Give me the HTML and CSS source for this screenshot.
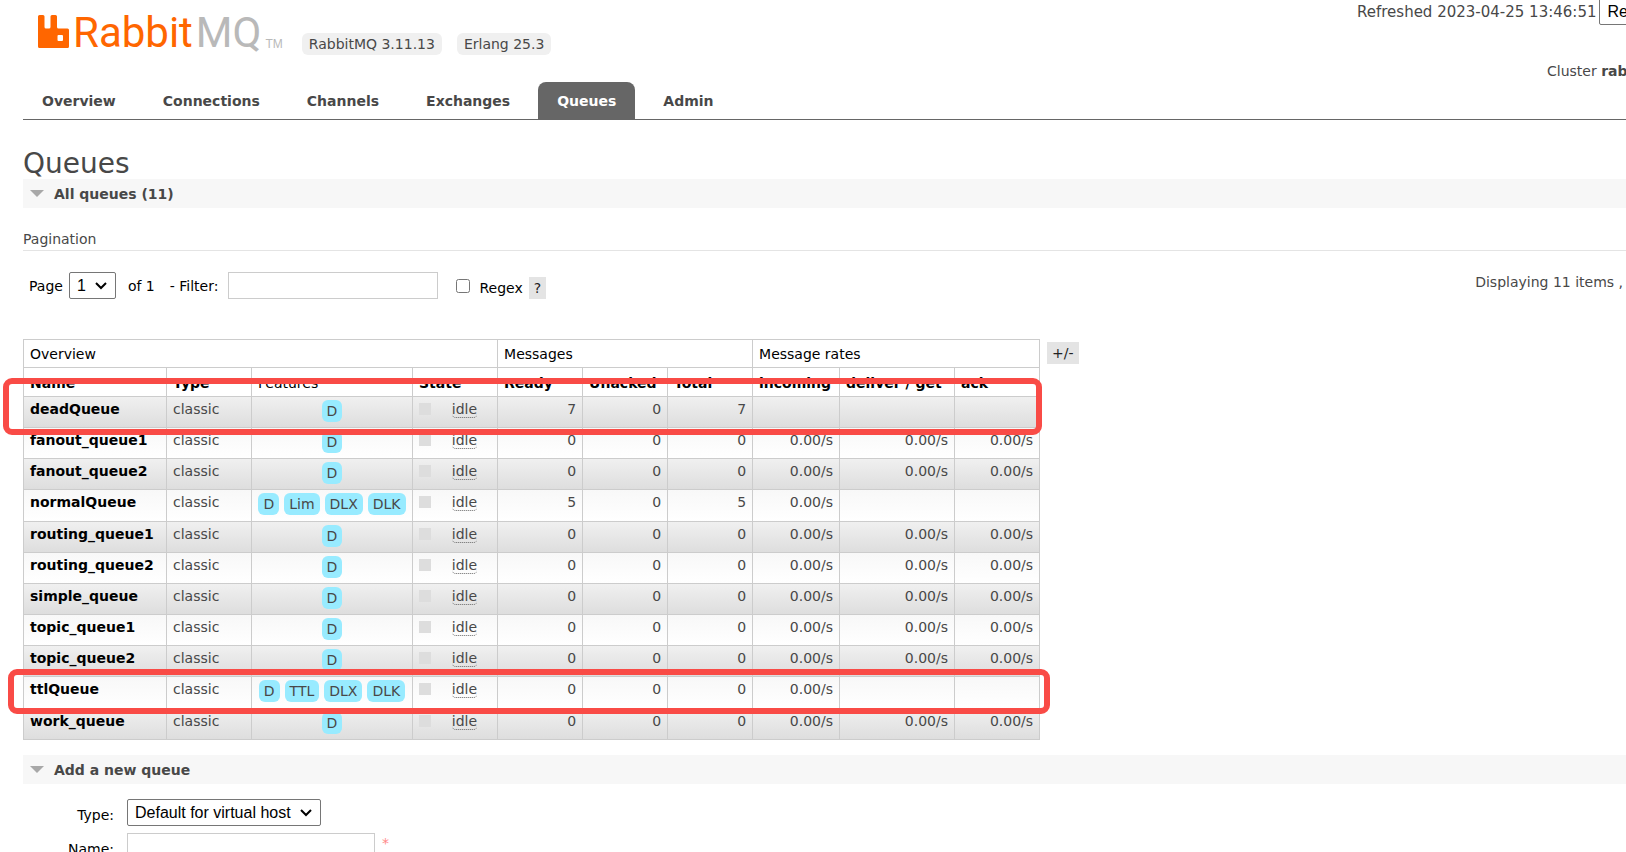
FILE: index.html
```html
<!DOCTYPE html>
<html lang="en">
<head>
<meta charset="utf-8">
<title>RabbitMQ Management</title>
<link rel="stylesheet" href="styles.css">
</head>
<body>
<header class="header">
  <div class="brand">
    <a class="logo" href="#">
      <svg class="logo-mark" viewBox="0 0 31 33" aria-hidden="true"><path fill="#f60" fill-rule="evenodd" d="M1.500 0H5Q6.500 0 6.500 1.500V12Q6.500 13.500 8 13.500H11Q12.500 13.500 12.500 12V1.500Q12.500 0 14 0H17.500Q19 0 19 1.500V12Q19 13.500 20.500 13.500H29.500Q31 13.500 31 15V31.500Q31 33 29.500 33H1.500Q0 33 0 31.500V1.500Q0 0 1.500 0ZM20.500 20Q19.500 20 19.500 21V25Q19.500 26 20.500 26H24Q25 26 25 25V21Q25 20 24 20Z"/></svg>
      <span class="logo-text">Rabbit<span class="logo-mq">MQ</span></span><span class="logo-tm">TM</span>
    </a>
    <span class="version">RabbitMQ 3.11.13</span>
    <span class="version">Erlang 25.3</span>
  </div>
  <div class="status">
    <div class="refresh"><label for="refresh">Refreshed 2023-04-25 13:46:51</label><select id="refresh"><option>Refresh</option></select></div>
    <div class="cluster">Cluster <b>rab</b></div>
  </div>
</header>
<nav class="tabs">
  <a href="#">Overview</a><a href="#">Connections</a><a href="#">Channels</a><a href="#">Exchanges</a><a class="selected" href="#">Queues</a><a href="#">Admin</a>
</nav>
<main class="main">
  <h1>Queues</h1>
  <h2 class="section">All queues (11)</h2>
  <h3 class="subhead">Pagination</h3>
  <div class="pager">
    <label for="page">Page</label><select id="page"><option>1</option></select>
    <span class="of">of 1</span>
    <label class="filter-label" for="filter">- Filter:</label><input id="filter" class="text filter" type="text">
    <input id="regex" class="check" type="checkbox"><label class="low" for="regex">Regex</label><button class="help low" type="button">?</button>
    <span class="count">Displaying 11 items ,</span>
  </div>
  <div class="list">
    <table class="queues">
      <colgroup><col class="c-name"><col class="c-num"><col class="c-feat"><col class="c-num"><col class="c-num"><col class="c-num"><col class="c-num"><col class="c-in"><col class="c-get"><col class="c-num"></colgroup>
      <thead>
        <tr class="groups"><th colspan="4">Overview</th><th colspan="3">Messages</th><th colspan="3">Message rates</th></tr>
        <tr><th>Name</th><th>Type</th><th class="plain">Features</th><th>State</th><th>Ready</th><th>Unacked</th><th>Total</th><th>incoming</th><th>deliver / get</th><th>ack</th></tr>
      </thead>
      <tbody>
        <tr><td><a href="#">deadQueue</a></td><td>classic</td><td class="feat"><span>D</span></td><td><div class="state"><i></i><abbr>idle</abbr></div></td><td class="r">7</td><td class="r">0</td><td class="r">7</td><td class="r"></td><td class="r"></td><td class="r"></td></tr>
        <tr><td><a href="#">fanout_queue1</a></td><td>classic</td><td class="feat"><span>D</span></td><td><div class="state"><i></i><abbr>idle</abbr></div></td><td class="r">0</td><td class="r">0</td><td class="r">0</td><td class="r">0.00/s</td><td class="r">0.00/s</td><td class="r">0.00/s</td></tr>
        <tr><td><a href="#">fanout_queue2</a></td><td>classic</td><td class="feat"><span>D</span></td><td><div class="state"><i></i><abbr>idle</abbr></div></td><td class="r">0</td><td class="r">0</td><td class="r">0</td><td class="r">0.00/s</td><td class="r">0.00/s</td><td class="r">0.00/s</td></tr>
        <tr class="multi"><td><a href="#">normalQueue</a></td><td>classic</td><td class="feat"><span>D</span><span>Lim</span><span>DLX</span><span>DLK</span></td><td><div class="state"><i></i><abbr>idle</abbr></div></td><td class="r">5</td><td class="r">0</td><td class="r">5</td><td class="r">0.00/s</td><td class="r"></td><td class="r"></td></tr>
        <tr><td><a href="#">routing_queue1</a></td><td>classic</td><td class="feat"><span>D</span></td><td><div class="state"><i></i><abbr>idle</abbr></div></td><td class="r">0</td><td class="r">0</td><td class="r">0</td><td class="r">0.00/s</td><td class="r">0.00/s</td><td class="r">0.00/s</td></tr>
        <tr><td><a href="#">routing_queue2</a></td><td>classic</td><td class="feat"><span>D</span></td><td><div class="state"><i></i><abbr>idle</abbr></div></td><td class="r">0</td><td class="r">0</td><td class="r">0</td><td class="r">0.00/s</td><td class="r">0.00/s</td><td class="r">0.00/s</td></tr>
        <tr><td><a href="#">simple_queue</a></td><td>classic</td><td class="feat"><span>D</span></td><td><div class="state"><i></i><abbr>idle</abbr></div></td><td class="r">0</td><td class="r">0</td><td class="r">0</td><td class="r">0.00/s</td><td class="r">0.00/s</td><td class="r">0.00/s</td></tr>
        <tr><td><a href="#">topic_queue1</a></td><td>classic</td><td class="feat"><span>D</span></td><td><div class="state"><i></i><abbr>idle</abbr></div></td><td class="r">0</td><td class="r">0</td><td class="r">0</td><td class="r">0.00/s</td><td class="r">0.00/s</td><td class="r">0.00/s</td></tr>
        <tr><td><a href="#">topic_queue2</a></td><td>classic</td><td class="feat"><span>D</span></td><td><div class="state"><i></i><abbr>idle</abbr></div></td><td class="r">0</td><td class="r">0</td><td class="r">0</td><td class="r">0.00/s</td><td class="r">0.00/s</td><td class="r">0.00/s</td></tr>
        <tr class="multi"><td><a href="#">ttlQueue</a></td><td>classic</td><td class="feat"><span>D</span><span>TTL</span><span>DLX</span><span>DLK</span></td><td><div class="state"><i></i><abbr>idle</abbr></div></td><td class="r">0</td><td class="r">0</td><td class="r">0</td><td class="r">0.00/s</td><td class="r"></td><td class="r"></td></tr>
        <tr><td><a href="#">work_queue</a></td><td>classic</td><td class="feat"><span>D</span></td><td><div class="state"><i></i><abbr>idle</abbr></div></td><td class="r">0</td><td class="r">0</td><td class="r">0</td><td class="r">0.00/s</td><td class="r">0.00/s</td><td class="r">0.00/s</td></tr>
      </tbody>
    </table>
    <button class="help columns" type="button">+/-</button>
    <div class="mark mark-dead"></div>
    <div class="mark mark-ttl"></div>
  </div>
  <h2 class="section">Add a new queue</h2>
  <form class="form">
    <label for="type">Type:</label><div><select id="type"><option>Default for virtual host</option></select></div>
    <label for="name">Name:</label><div class="field"><input id="name" class="text name" type="text"><span class="mand">*</span></div>
  </form>
</main>
</body>
</html>
```
FILE: styles.css
```css
* { box-sizing: border-box; }
html, body { height: 100%; overflow: hidden; }
body { margin: 0; background: #fff; color: #484848; font: 14px/20px Verdana, "DejaVu Sans", sans-serif; }
a { color: inherit; text-decoration: none; }
h1, h2, h3 { margin: 0; }

.header { display: flex; justify-content: space-between; height: 82px; padding-left: 38px; }
.brand { display: flex; align-items: flex-start; }
.logo { display: flex; align-items: flex-start; padding-top: 15px; margin-right: 19px; }
.logo-mark { width: 31px; height: 33px; margin-right: 4px; }
.logo-text { color: #f60; font: 42px/36px Roboto, sans-serif; }
.logo-mq { color: #b9b9b9; margin-left: 3px; }
.logo-tm { color: #b9b9b9; font: 12px/14px "Liberation Sans", sans-serif; margin: 22px 0 0 4px; }
.version { margin: 33px 15px 0 0; padding: 1px 7px; border-radius: 6px; background: #f0f0f0; }
.status { overflow: hidden; width: 269px; white-space: nowrap; }
.refresh { display: flex; gap: 3px; margin-top: -2px; }
.refresh label { padding-top: 4px; flex: none; font-size: 15px; }
.refresh select { flex: none; width: 200px; }
.cluster { margin-top: 36px; padding-left: 190px; }

.tabs { display: flex; gap: 9px; margin-left: 23px; border-bottom: 1px solid #666; font-weight: bold; }
.tabs a { padding: 9px 19px 8px; border-radius: 8px 8px 0 0; }
.tabs .selected { background: #666; color: #fff; }

.main { padding: 28px 0 0 23px; }
h1 { font-size: 28px; line-height: 31px; font-weight: normal; }
.section { display: flex; align-items: center; gap: 10px; height: 29px; padding-left: 7px; background: #f7f7f7; font-size: 14px; line-height: 20px; }
.section::before { content: ""; border: solid transparent; border-width: 7px 7px 0; border-top-color: #a8a8a8; }
.subhead { margin-top: 21px; padding-bottom: 1px; border-bottom: 1px solid #e4e4e4; font-size: 14px; line-height: 20px; font-weight: normal; }

select, .text { height: 27px; background: #fff; color: #000; font: 16px "Liberation Sans", Arial, sans-serif; }
select { padding: 0 24px 0 7px; appearance: none; border: 1px solid #767676; border-radius: 2px;
  background: #fff url("data:image/svg+xml,%3Csvg xmlns='http://www.w3.org/2000/svg' width='12' height='8'%3E%3Cpath d='M1 1l5 5 5-5' fill='none' stroke='%23000' stroke-width='2'/%3E%3C/svg%3E") no-repeat right 8px center; }
.text { border: 1px solid #ccc; }
.help { border: 0; padding: 1px 5px; background: #e4e4e4; color: #222; font: inherit; }

.pager { display: flex; align-items: center; padding: 21px 3px 0 6px; color: #000; }
.pager select { margin-left: 6px; width: 47px; }
.of { margin-left: 12px; }
.filter-label { margin: 0 10px 0 15px; }
.filter { width: 210px; }
.check { width: 14px; height: 14px; margin: 0 9px 0 18px; }
.low { margin-top: 5px; }
.help.low { margin-left: 6px; }
.count { margin: 0 0 7px auto; color: #484848; }

.list { position: relative; display: flex; align-items: flex-start; gap: 7px; margin: 40px 0 15px; }
.queues { border-collapse: collapse; table-layout: fixed; width: 1016px; }
.c-name { width: 143px; }
.c-num { width: 85px; }
.c-feat { width: 161px; }
.c-in { width: 87px; }
.c-get { width: 115px; }
.queues th, .queues td { border: 1px solid #ccc; padding: 2px 6px; text-align: left; vertical-align: top; white-space: nowrap; }
.queues th { padding: 5px 6px 3px; color: #000; }
.queues .groups th { padding: 4px 6px 3px; }
.queues .groups th, .queues .plain { font-weight: normal; }
.queues td { height: 31px; }
.queues .multi td { height: 32px; }
.queues tbody tr { background: linear-gradient(#f8f8f8, #fff); }
.queues tbody tr:nth-child(odd) { background: linear-gradient(#f0f0f0, #ddd); }
.queues td a { color: #000; font-weight: bold; }
.queues .r { text-align: right; }
.queues .feat { padding-top: 3px; text-align: center; }
.feat span { display: inline-block; margin: 0 5px 0 0; padding: 1px 5px; border-radius: 6px; background: #98ebff; }
.feat span:last-child { margin-right: 0; }
.state { display: flex; justify-content: space-between; align-items: flex-start; padding-right: 14px; }
.state i { width: 12px; height: 12px; margin-top: 4px; background: #ddd; }
.state abbr { height: 19px; border-bottom: 1px dotted #666; border-radius: 4px; }
.columns { margin-top: 3px; }
.mark { position: absolute; border: 6px solid #f94b46; border-radius: 9px; }
.mark-dead { left: -20px; top: 39px; width: 1039px; height: 57px; }
.mark-ttl { left: -15px; top: 330px; width: 1042px; height: 45px; }

.form { display: grid; grid-template-columns: 91px 1fr; gap: 7px 13px; margin-top: 15px; color: #000; }
.form label { padding-top: 6px; text-align: right; }
.form select { width: 194px; }
.field { display: flex; gap: 7px; }
.name { width: 248px; }
.mand { color: #f88; }
```
